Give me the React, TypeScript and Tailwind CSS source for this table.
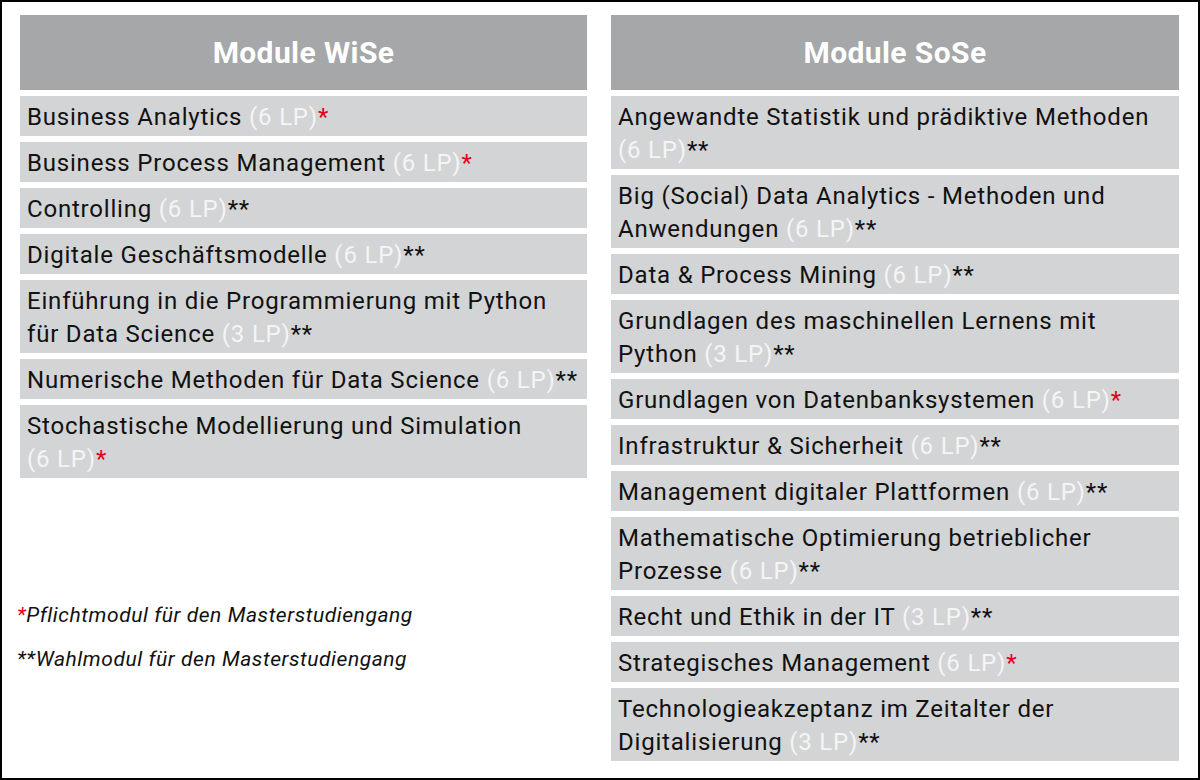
import React from "react";

type Item = { lines: string[]; lp: string; star: "*" | "**" };

const wise: Item[] = [
  { lines: ["Business Analytics"], lp: "6", star: "*" },
  { lines: ["Business Process Management"], lp: "6", star: "*" },
  { lines: ["Controlling"], lp: "6", star: "**" },
  { lines: ["Digitale Geschäftsmodelle"], lp: "6", star: "**" },
  { lines: ["Einführung in die Programmierung mit Python", "für Data Science"], lp: "3", star: "**" },
  { lines: ["Numerische Methoden für Data Science"], lp: "6", star: "**" },
  { lines: ["Stochastische Modellierung und Simulation", ""], lp: "6", star: "*" },
];

const sose: Item[] = [
  { lines: ["Angewandte Statistik und prädiktive Methoden", ""], lp: "6", star: "**" },
  { lines: ["Big (Social) Data Analytics - Methoden und", "Anwendungen"], lp: "6", star: "**" },
  { lines: ["Data & Process Mining"], lp: "6", star: "**" },
  { lines: ["Grundlagen des maschinellen Lernens mit", "Python"], lp: "3", star: "**" },
  { lines: ["Grundlagen von Datenbanksystemen"], lp: "6", star: "*" },
  { lines: ["Infrastruktur & Sicherheit"], lp: "6", star: "**" },
  { lines: ["Management digitaler Plattformen"], lp: "6", star: "**" },
  { lines: ["Mathematische Optimierung betrieblicher", "Prozesse"], lp: "6", star: "**" },
  { lines: ["Recht und Ethik in der IT"], lp: "3", star: "**" },
  { lines: ["Strategisches Management"], lp: "6", star: "*" },
  { lines: ["Technologieakzeptanz im Zeitalter der", "Digitalisierung"], lp: "3", star: "**" },
];

function Row({ item }: { item: Item }) {
  const last = item.lines.length - 1;
  return (
    <div className="bg-[#d3d4d5] pl-[7px] pt-[5px] pb-[2px] text-[24px] leading-[33px] tracking-[0.8px] text-[#111111] whitespace-nowrap">
      {item.lines.map((l, i) => (
        <div key={i}>
          {l}
          {i === last && (
            <>
              {l !== "" ? " " : ""}
              <span className="text-[#f5f5f5]">({item.lp} LP)</span>
              <span className={item.star === "*" ? "text-[#e2001a]" : "text-[#111111]"}>{item.star}</span>
            </>
          )}
        </div>
      ))}
    </div>
  );
}

function Header({ title }: { title: string }) {
  return (
    <div className="h-[75px] bg-[#a6a7a9] flex items-center justify-center text-white font-bold text-[30px] tracking-[0.4px]">
      {title}
    </div>
  );
}

export default function App() {
  return (
    <div className="w-[1200px] h-[780px] border-2 border-black bg-white flex gap-[24px] pl-[18px] pr-[19px] pt-[13px] font-['Roboto',sans-serif]">
      <div className="w-[567px] flex flex-col">
        <Header title="Module WiSe" />
        <div className="flex flex-col gap-[6px] mt-[6px]">
          {wise.map((it, i) => (
            <Row key={i} item={it} />
          ))}
        </div>
        <div className="mt-[115px] -ml-[3px] italic text-[21px] leading-[44px] tracking-[0.55px] text-[#111111]">
          <div>
            <span className="text-[#e2001a]">*</span>Pflichtmodul für den Masterstudiengang
          </div>
          <div>**Wahlmodul für den Masterstudiengang</div>
        </div>
      </div>
      <div className="w-[568px] flex flex-col">
        <Header title="Module SoSe" />
        <div className="flex flex-col gap-[6px] mt-[6px]">
          {sose.map((it, i) => (
            <Row key={i} item={it} />
          ))}
        </div>
      </div>
    </div>
  );
}
